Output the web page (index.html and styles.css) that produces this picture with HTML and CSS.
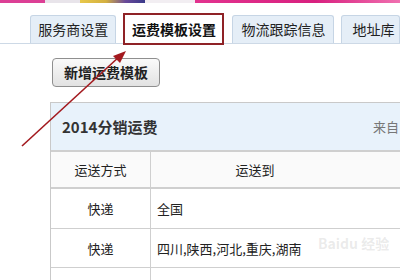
FILE: index.html
```html
<!DOCTYPE html>
<html>
<head>
<meta charset="utf-8">
<link rel="stylesheet" href="styles.css">
</head>
<body>
<div class="banner">
  <span class="seg s1"></span><span class="seg s2"></span><span class="seg s3"></span><span class="seg s4"></span><span class="seg s5"></span><span class="seg s6"></span>
</div>
<div class="tabs">
  <div class="tab">服务商设置</div>
  <div class="tab active">运费模板设置</div>
  <div class="tab">物流跟踪信息</div>
  <div class="tab last">地址库</div>
</div>
<div class="actions">
  <button class="btn">新增运费模板</button>
</div>
<div class="table">
  <div class="thead">
    <span class="title">2014分销运费</span>
    <span class="from">来自</span>
  </div>
  <div class="row head">
    <div class="c1">运送方式</div>
    <div class="c2 center">运送到</div>
  </div>
  <div class="row">
    <div class="c1">快递</div>
    <div class="c2">全国</div>
  </div>
  <div class="row">
    <div class="c1">快递</div>
    <div class="c2">四川,陕西,河北,重庆,湖南</div>
  </div>
  <div class="row">
    <div class="c1 faint">快递</div>
    <div class="c2 faint">全国</div>
  </div>
</div>
<div class="watermark">Bai<span class="du">du</span> 经验</div>
<svg class="arrow" width="400" height="280" viewBox="0 0 400 280">
  <line x1="22" y1="146" x2="120" y2="56" stroke="#a3191e" stroke-width="1.6"/>
  <polygon points="126,51 113,56 120,63" fill="#a3191e"/>
</svg>
</body>
</html>
```
FILE: styles.css
```css
html, body {
  margin: 0;
  padding: 0;
  background: #fff;
  width: 400px;
  height: 280px;
  overflow: hidden;
  font-family: "Noto Sans CJK SC", "Liberation Sans", sans-serif;
  position: relative;
}
.banner {
  display: flex;
  height: 3px;
}
.seg { display: block; height: 3px; }
.s1 { width: 45px; background: #dc3f95; }
.s2 { width: 35px; background: #e8e4ea; }
.s3 { width: 65px; background: linear-gradient(90deg, #e8c84a, #d4b040 40%, #6a4a9a 70%, #3a3a8a); }
.s4 { width: 50px; background: #f2eef2; }
.s5 { width: 120px; background: linear-gradient(90deg, #e2338f, #d8207f); }
.s6 { flex: 1; background: linear-gradient(90deg, #d8207f, #f070b0); }

.tabs {
  display: flex;
  align-items: flex-end;
  margin-top: 11px;
  padding-left: 30px;
  height: 30px;
  border-bottom: 1px solid #cdd9e6;
  box-sizing: border-box;
  gap: 7px;
}
.tab {
  width: 89px;
  height: 28px;
  box-sizing: border-box;
  border: 1px solid #c6d5e5;
  border-bottom: none;
  border-radius: 3px 3px 0 0;
  background: #e5eef7;
  color: #222;
  font-size: 14px;
  line-height: 26px;
  text-align: center;
}
.tab.active {
  width: 104px;
  height: 32px;
  margin-bottom: -2px;
  background: #fff;
  border: 2px solid #8f2226;
  border-radius: 0;
  font-weight: bold;
  color: #111;
  line-height: 28px;
}
.tab:nth-child(3) { width: 105px; margin-left: 1px; }
.tab.last { width: 60px; text-align: left; padding-left: 10px; }

.actions {
  padding: 14px 0 0 52px;
  height: 44px;
  box-sizing: border-box;
}
.btn {
  width: 108px;
  height: 29px;
  padding: 0;
  border: 1px solid #8f8f8f;
  border-radius: 4px;
  background: linear-gradient(#fafafa, #e2e2e2);
  font-family: "Noto Sans CJK SC", sans-serif;
  font-size: 14px;
  font-weight: bold;
  color: #222;
  line-height: 27px;
}

.table {
  margin-left: 50px;
  margin-top: 14px;
  width: 360px;
  border-top: 1px solid #c9c9c9;
  border-left: 1px solid #c9c9c9;
}
.thead {
  display: flex;
  justify-content: space-between;
  align-items: center;
  height: 47px;
  background: #e8f2fb;
  border-bottom: 2px solid #cfcfcf;
  padding-left: 11px;
  padding-right: 12px;
}
.title {
  font-size: 15px;
  font-weight: bold;
  color: #333;
}
.from {
  font-size: 13px;
  color: #777;
}
.row {
  display: flex;
  height: 39px;
  border-bottom: 1px solid #cfcfcf;
  font-size: 13px;
  color: #222;
}
.row.head { height: 35px; background: #fafafa; border-bottom-width: 2px; }
.row:nth-child(4) { height: 38px; }
.c1 {
  width: 99px;
  border-right: 1px solid #cfcfcf;
  display: flex;
  align-items: center;
  justify-content: center;
}
.c2 {
  flex: 1;
  display: flex;
  align-items: center;
  padding-left: 6px;
}
.c2.center { justify-content: center; padding-left: 0; padding-right: 52px; }
.faint { color: #ccc; }

.watermark {
  position: absolute;
  left: 318px;
  top: 236px;
  color: rgba(150,150,150,0.2);
  font-size: 14px;
  font-weight: bold;
  line-height: 14px;
  pointer-events: none;
}
.arrow {
  position: absolute;
  left: 0;
  top: 0;
  pointer-events: none;
}
```
